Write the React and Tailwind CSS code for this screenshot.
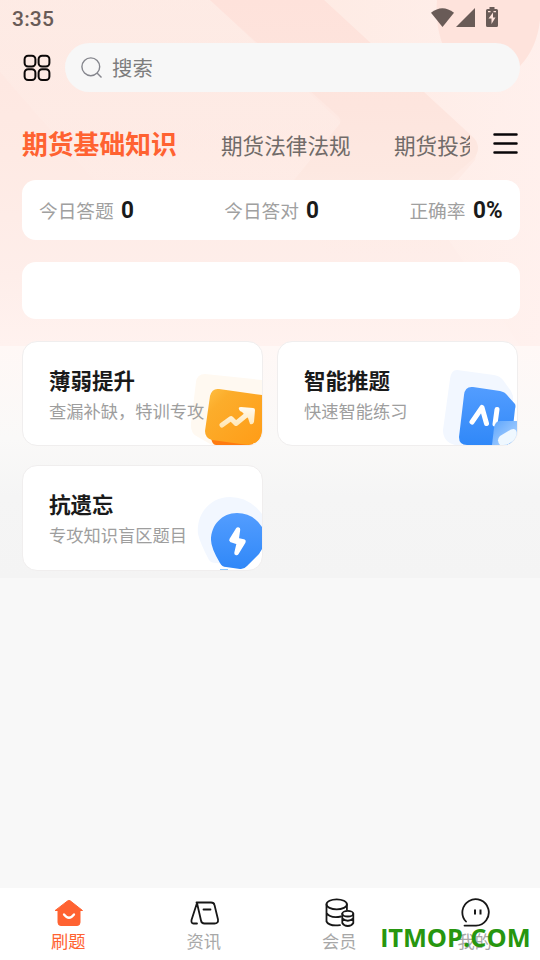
import React from "react";

function Backdrop() {
  return (
    <svg className="absolute left-0 top-0 h-[578px] w-[540px]" viewBox="0 0 540 578" aria-hidden="true">
      <defs>
        <linearGradient id="top" x1="0" y1="0" x2="0" y2="1">
          <stop offset="0" stopColor="#fee6e0" />
          <stop offset=".45" stopColor="#feeae4" />
          <stop offset=".8" stopColor="#feeeea" />
          <stop offset="1" stopColor="#fff2ef" />
        </linearGradient>
        <linearGradient id="low" x1="0" y1="0" x2="0" y2="1">
          <stop offset="0" stopColor="#fff8f6" />
          <stop offset=".4" stopColor="#faf9f8" />
          <stop offset=".65" stopColor="#f5f5f5" />
          <stop offset="1" stopColor="#f4f4f4" />
        </linearGradient>
        <linearGradient id="band" gradientUnits="userSpaceOnUse" x1="300" y1="0" x2="300" y2="262">
          <stop offset="0" stopColor="#fee2db" />
          <stop offset=".4" stopColor="#fde5de" />
          <stop offset=".65" stopColor="#fde8e1" />
          <stop offset="1" stopColor="#feede8" stopOpacity="0" />
        </linearGradient>
        <linearGradient id="fade" x1="0" y1="0" x2="0" y2="1">
          <stop offset="0" stopColor="#fdeee8" stopOpacity=".6" />
          <stop offset="1" stopColor="#feeee9" stopOpacity="0" />
        </linearGradient>
        <linearGradient id="pale" gradientUnits="userSpaceOnUse" x1="324" y1="0" x2="540" y2="0">
          <stop offset="0" stopColor="#feece5" />
          <stop offset="1" stopColor="#fff1ee" />
        </linearGradient>
      </defs>
      <path fill="url(#top)" d="M0 0h540v346H0z" />
      <path fill="url(#fade)" d="M40 0H210L490 262H165L0 72V0z" />
      <path fill="url(#pale)" opacity=".85" d="M324 0H540V346H520L430 212L475 160L478 147z" />
      <path fill="url(#band)" d="M210 0H324L474 138Q482 148 474 158L432 195L445 262H330L290 185L338 126Q343 121 338 116L300 82z" />
      <path fill="#fee3dc" d="M437 0H540V20Q537 48 520 66H455Q434 40 437 0z" />
      <path fill="url(#low)" d="M0 346h540v232H0z" />
    </svg>
  );
}

function StatusBar() {
  return (
    <div className="flex h-[43px] items-start justify-between pl-3 pr-[40px] pt-[7px] text-[#695b57]">
      <span className="font-[Roboto] text-[21px] font-medium leading-6 tracking-[0.2px]">3:35</span>
      <svg className="h-[22px] w-[70px]" viewBox="430 7 70 22" fill="currentColor">
        <path d="M431 12.700Q442.300 3.600 454 12.700L442.500 27z" />
        <path d="M475 8v19h-19z" />
        <path fillRule="evenodd" d="M489.500 7h5v2h2q1.500 0 1.500 1.500v15q0 1.500-1.500 1.500h-9q-1.500 0-1.500-1.500v-15q0-1.500 1.500-1.500h2zM493 12.500l-4.500 6h3v5.500l4-6.500h-2.500zM488 11v1.300h2.500V11zM493.500 11v1.300h2.500V11z" />
      </svg>
    </div>
  );
}

function SearchRow() {
  return (
    <div className="flex h-[49px] items-center pl-[23px] pr-5">
      <svg className="h-7 w-7 shrink-0" viewBox="0 0 28 28" fill="none" stroke="#0c0808" strokeWidth="2">
        <rect x="1.600" y="1.700" width="10.800" height="10.800" rx="3.500" />
        <rect x="15.600" y="1.700" width="10.800" height="10.800" rx="3.500" />
        <rect x="1.600" y="15.200" width="10.800" height="10.800" rx="3.500" />
        <rect x="15.600" y="15.200" width="10.800" height="10.800" rx="3.500" />
      </svg>
      <div className="ml-3.5 flex h-full flex-1 items-center rounded-full bg-[#f7f7f7] pl-4">
        <svg className="h-[22px] w-[22px]" viewBox="0 0 22 22" fill="none" stroke="#85868d" strokeWidth="1.400">
          <circle cx="9.800" cy="9.800" r="8.900" />
          <path d="M16 16l4.500 4.500" />
        </svg>
        <span className="-mt-0.5 ml-[9px] text-[20.4px] leading-6 text-[#7d7d7d]">搜索</span>
      </div>
    </div>
  );
}

function Tabs() {
  return (
    <div className="flex h-[88px] pl-[22px]">
      <div className="flex w-[448px] overflow-hidden whitespace-nowrap pt-[33px] leading-9">
        <span className="w-[199px] shrink-0 text-[25.8px] font-bold text-[#ff6231]">期货基础知识</span>
        <span className="w-[173px] shrink-0 pt-[2px] text-[21.6px] text-[#716b69]">期货法律法规</span>
        <span className="shrink-0 pt-[2px] text-[21.6px] text-[#716b69]">期货投资分析</span>
      </div>
      <svg className="ml-[23px] mt-10 h-6 w-[25px]" viewBox="0 0 25 24" stroke="#080608" strokeWidth="2.500" strokeLinecap="round">
        <path d="M1.500 2.500h22M1.500 11.500h22M1.500 20.500h22" />
      </svg>
    </div>
  );
}

function Stat({ label, value }) {
  return (
    <div className="flex items-center">
      <span className="text-[18.7px] text-[#a0a0a0]">{label}</span>
      <span className={`ml-[7.5px] origin-left scale-x-[0.92] whitespace-nowrap font-[Roboto] text-[24.5px] font-bold text-[#1a1a1a] ${value === "0" ? "w-[13px]" : "w-[30px]"}`}>{value}</span>
    </div>
  );
}

function TrendArt() {
  return (
    <svg className="absolute bottom-0 right-0 h-[75px] w-[75px]" viewBox="187 370 75 75">
      <defs>
        <linearGradient id="orange" x1="0" y1="0" x2="1" y2="1">
          <stop stopColor="#ffc044" />
          <stop offset=".25" stopColor="#fcad2b" />
          <stop offset="1" stopColor="#ff9c17" />
        </linearGradient>
        <linearGradient id="cream" gradientUnits="userSpaceOnUse" x1="235" y1="405" x2="235" y2="428">
          <stop stopColor="#fffdf8" />
          <stop offset="1" stopColor="#ffe5b1" />
        </linearGradient>
      </defs>
      <path fill="#fff9f1" d="M205 374Q197 374 196 382L191 423Q190 434 198 437L212 445H262V380z" />
      <path fill="#ff7b10" d="M211 437h42v8h-37q-4 0-5-8z" />
      <path fill="url(#orange)" d="M219 389L262 395V433Q260 444 248 445L212 440Q205 438 205 431L210 396Q212 388 219 389z" />
      <path fill="none" stroke="url(#cream)" strokeWidth="5" strokeLinecap="round" strokeLinejoin="round" d="M222 425L231 418.500L236 423.500L250 412" />
      <path fill="url(#cream)" d="M241 407l12 1q2 0 2 2l-1 12q-1 3-4 2l-2-6-6-6-2-1q-3-4 1-4z" />
    </svg>
  );
}

function AiArt() {
  return (
    <svg className="absolute bottom-0 right-0 h-[78px] w-[78px]" viewBox="439 367 78 78">
      <defs>
        <linearGradient id="blue" x1="0" y1="0" x2="0" y2="1">
          <stop stopColor="#539dff" />
          <stop offset="1" stopColor="#3088f8" />
        </linearGradient>
        <linearGradient id="glass" x1="0" y1="0" x2="1" y2="1">
          <stop stopColor="#5ba4fc" />
          <stop offset="1" stopColor="#b6d8ff" />
        </linearGradient>
      </defs>
      <path fill="#f2f7ff" d="M457 370L494 375Q500 376 503 380L511 391L513 396V445H455Q443 442 443 430L450 379Q451 370 457 370z" />
      <path fill="url(#blue)" d="M473 387L500 391Q505 392 507 395L515 404Q516 406 515 409L511 445H467Q459 445 459 437L464 395Q465 386 473 387z" />
      <path fill="none" stroke="#fff" strokeWidth="5" strokeLinecap="round" strokeLinejoin="round" d="M472 422L482 407.500L486.500 423.500M497 409.500L495 424" />
      <path fill="url(#glass)" d="M500 421H517V445H492L494 428Q495 421 500 421z" />
      <path fill="#eff8ff" d="M500 436L511 429.500Q517 427 517 435V438L507 445H500Q496 440 500 436z" />
    </svg>
  );
}

function BoltArt() {
  return (
    <svg className="absolute bottom-0 right-0 h-[75px] w-[66px]" viewBox="196 495 66 75">
      <path fill="#f2f7ff" d="M230 497C210 497 196 514 198 534Q200 543 209 560Q211 563 216 563L240 566L262 550V514Q249 497 230 497z" />
      <path fill="url(#blue)" d="M237 513C222 513 211 525 211 540Q211 548 220 563Q222 567 226 567L240 569Q244 569.500 247 566L259 554L262 549V527Q253 513 237 513z" />
      <path fill="none" stroke="#8dc9ff" strokeWidth="1" d="M220 569.500h8" />
      <path fill="#fff" stroke="#fff" strokeWidth="4.500" strokeLinecap="round" strokeLinejoin="round" d="M238 529.500L231.500 540L239 542.500L236.500 553L243.500 541.500L236.500 540z" />
    </svg>
  );
}

function Feature({ title, text, children, tall }) {
  return (
    <div className={`relative overflow-hidden rounded-[15px] border border-[#f0eeee] bg-white pl-[26px] pt-[23px] ${tall ? "h-[106px]" : "h-[105px]"}`}>
      {children}
      <div className="relative text-[21.5px] font-bold leading-[30px] text-[#1a1a1a]">{title}</div>
      <div className="relative mt-1 whitespace-nowrap text-[17.25px] leading-6 text-[#9e9e9e]">{text}</div>
    </div>
  );
}

function NavItem({ label, active, children }) {
  return (
    <div className={`flex w-[135.5px] shrink-0 flex-col items-center pt-[10px] ${active ? "text-[#ff6231]" : "text-[#a8a8a8]"}`}>
      <svg className="ml-[3px] h-[30px] w-[30px]" viewBox="0 0 30 30" fill="none" stroke="#171717" strokeWidth="1.800" strokeLinecap="round" strokeLinejoin="round">
        {children}
      </svg>
      <span className="mt-[1px] pl-px text-[17.25px] leading-6">{label}</span>
    </div>
  );
}

export default function App() {
  return (
    <div className="relative flex h-[960px] w-[540px] flex-col overflow-hidden bg-[#f8f8f8] font-['Noto_Sans_CJK_SC',sans-serif]">
      <Backdrop />
      <main className="relative flex-1">
        <StatusBar />
        <SearchRow />
        <Tabs />
        <div className="ml-[22px] mr-5 flex h-[60px] items-center justify-between rounded-[14px] bg-white px-[17px]">
          <Stat label="今日答题" value="0" />
          <Stat label="今日答对" value="0" />
          <Stat label="正确率" value="0%" />
        </div>
        <div className="ml-[22px] mr-5 mt-[22px] h-[57px] rounded-[14px] bg-white" />
        <div className="mx-[22px] mt-[22px] grid grid-cols-[241px_241px] gap-x-[14px] gap-y-[19px]">
          <Feature title="薄弱提升" text="查漏补缺，特训专攻"><TrendArt /></Feature>
          <Feature title="智能推题" text="快速智能练习"><AiArt /></Feature>
          <Feature title="抗遗忘" text="专攻知识盲区题目" tall><BoltArt /></Feature>
        </div>
      </main>
      <nav className="relative flex h-[72px] bg-white">
        <NavItem label="刷题" active>
          <path fill="#ff6231" stroke="#ff6231" strokeWidth="1" d="M13.800 2.800Q15 2 16.200 2.800L28.500 12.500H26V24.500q0 3-3 3H7q-3 0-3-3V12.500H1.500z" />
          <path stroke="#fff" strokeWidth="2.300" d="M10 16.500q5 6.500 10 0" />
        </NavItem>
        <NavItem label="资讯">
          <path d="M6.500 4.500H21Q24 4.500 24.500 7L28 21.500Q28.500 25.500 24.500 25.500H14.500Q11.500 25.500 11 22.500L7 5L1.500 22Q1 25.500 3.500 25.500H7M13.500 11.500H20.500" />
        </NavItem>
        <NavItem label="会员">
          <ellipse cx="11.700" cy="6.300" rx="10.200" ry="5" />
          <path d="M1.500 6.500V23.500Q4 28.500 15 27.200M21.900 6.500V11.500M1.500 15Q5 20.500 16 18.500" />
          <ellipse cx="22.800" cy="15.700" rx="5.500" ry="2.800" />
          <path d="M17.300 15.700V25Q19 28 22.800 28T28.300 25V15.700M17.300 20.500Q22.800 25 28.300 20.500" />
        </NavItem>
        <NavItem label="我的">
          <path d="M5 23.500A13.200 13.200 0 1 1 15 27.600H3.500" />
          <path strokeWidth="2" strokeLinecap="butt" d="M14 11.500v5M19.500 11.500v5" />
        </NavItem>
        <span className="absolute left-[380.5px] top-[31px] whitespace-nowrap font-['Open_Sans'] text-[25.4px] font-bold leading-[36px] text-[#27960f]"><span className="font-[Lato] font-black leading-none">I</span>TMOP.COM</span>
      </nav>
    </div>
  );
}
